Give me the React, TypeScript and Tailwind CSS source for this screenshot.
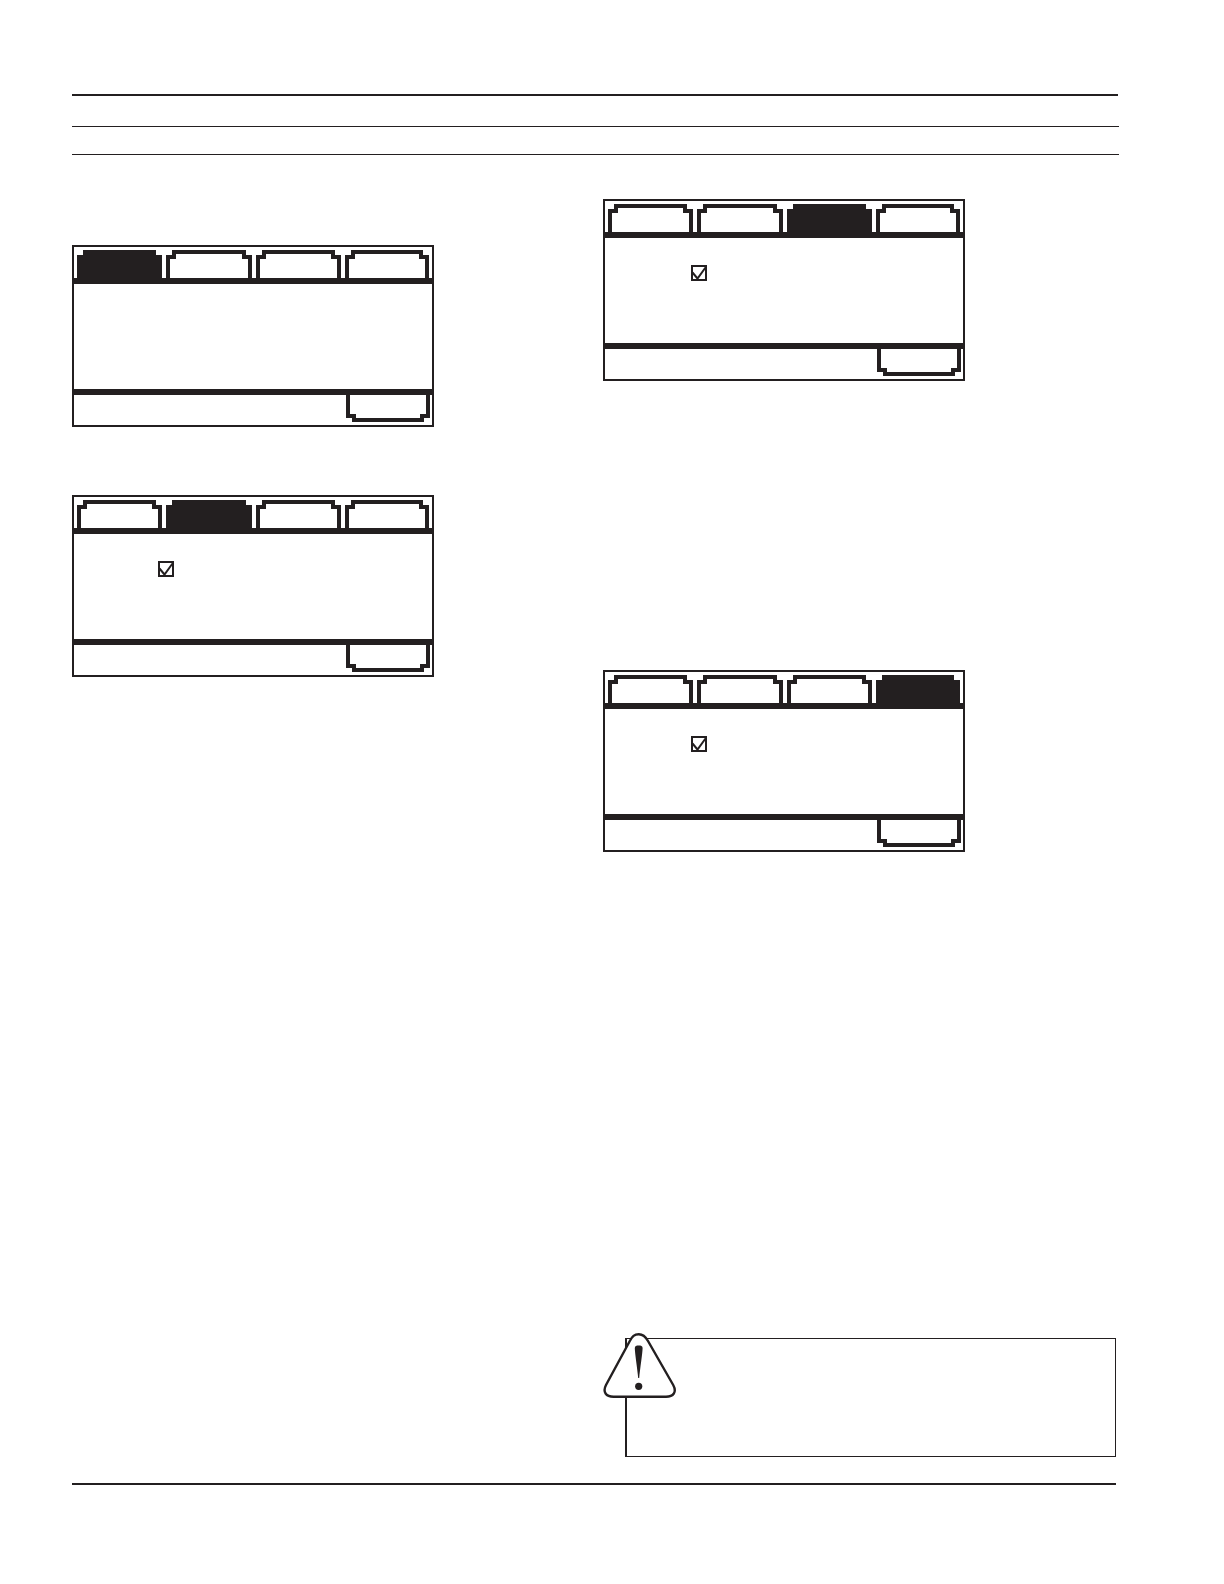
import clsx from "clsx";

// stepped corners: the inner face repeats the outer shape 4px further in
const TAB_SHAPE =
  "[clip-path:polygon(6px_0,calc(100%_-_6px)_0,calc(100%_-_6px)_5px,100%_5px,100%_100%,0_100%,0_5px,6px_5px)]";
const FOOT_SHAPE =
  "[clip-path:polygon(0_0,100%_0,100%_calc(100%_-_4px),calc(100%_-_6px)_calc(100%_-_4px),calc(100%_-_6px)_100%,6px_100%,6px_calc(100%_-_4px),0_calc(100%_-_4px))]";

function CheckBox({ label }: { label: string }) {
  return (
    <label className="relative block w-4 h-4">
      <input
        type="checkbox"
        defaultChecked
        aria-label={label}
        className="peer appearance-none block w-4 h-4 border-2 border-[#231f20] bg-white"
      />
      <svg
        viewBox="0 0 16 16"
        className="absolute inset-0 w-4 h-4 pointer-events-none invisible peer-checked:visible"
        fill="none"
        stroke="#231f20"
        strokeWidth="2"
      >
        <path d="M1.5 7.5 L6.5 13.5 L14.5 2.5" />
      </svg>
    </label>
  );
}

type ScreenProps = {
  name: string;
  active: number;
  bodyClass?: string;
  check?: boolean;
};

function Screen({ name, active, bodyClass, check = true }: ScreenProps) {
  return (
    <section aria-label={name} className="w-full max-w-[362px] border-2 border-[#231f20] bg-white">
      {/* Tabs */}
      <div role="tablist" className="grid grid-cols-[85fr_86fr_85fr_84fr] gap-1 px-[3px] pt-[3px]">
        {[0, 1, 2, 3].map((i) => (
          <button
            key={i}
            type="button"
            role="tab"
            aria-selected={i === active}
            aria-label={`Tab ${i + 1}`}
            className={clsx("h-7 px-1 pt-1 bg-[#231f20]", TAB_SHAPE)}
          >
            <span className={clsx("block h-full", TAB_SHAPE, i === active ? "bg-[#231f20]" : "bg-white")} />
          </button>
        ))}
      </div>

      {/* Body */}
      <div className={clsx("min-h-[117px] border-y-[6px] border-[#231f20] pt-[27px]", bodyClass)}>
        {check && <CheckBox label={`${name} enabled`} />}
      </div>

      {/* Footer */}
      <div className="flex justify-end pr-0.5 pb-[3px]">
        <button
          type="button"
          aria-label="Exit"
          className={clsx("w-[84px] h-[27px] px-1 pb-1 bg-[#231f20]", FOOT_SHAPE)}
        >
          <span className={clsx("block h-full bg-white", FOOT_SHAPE)} />
        </button>
      </div>
    </section>
  );
}

function Caution() {
  return (
    <aside aria-label="Caution" className="relative ml-[22px] mr-[3px] min-h-[119px] border border-l-2 border-[#231f20]">
      <svg
        viewBox="0 0 74 66"
        className="absolute -left-6 -top-1.5 w-[74px] h-[66px]"
        fill="#231f20"
      >
        <path
          d="M26.8 8 C29.3 3.5 31.2 1.2 35.8 1.2 S42.5 3.5 45 8 L70.2 52 C74 59 70.5 63.7 63 63.7 H10.5 C3 63.7 -0.6 59 3 52 Z"
          fill="#fff"
          stroke="#231f20"
          strokeWidth="2.4"
        />
        <path d="M31.8 15 C31.8 12.8 33.5 12.4 35.7 12.4 S39.6 12.8 39.6 15 C39.6 20 37 36 36.2 45 H35.2 C34.4 36 31.8 20 31.8 15 Z" />
        <circle cx="35.7" cy="53.3" r="3.6" />
      </svg>
    </aside>
  );
}

export default function App() {
  return (
    <div className="min-h-screen bg-white pl-[72px] pr-[105px] pt-[94px] pb-[99px]">
      <header>
        <div className="mr-px border-t-2 border-[#231f20]" />
        <div className="mt-[30px] h-[29px] border-y border-[#231f20]" />
      </header>

      <main className="grid grid-cols-2 gap-[15px]">
        <div className="flex flex-col gap-[68px] pt-[90px]">
          <Screen name="Screen 1" active={0} check={false} />
          <Screen name="Screen 2" active={1} bodyClass="pl-[84px]" />
        </div>
        <div className="flex flex-col pt-11">
          <Screen name="Screen 3" active={2} bodyClass="pl-[86px]" />
          <div className="mt-[289px] mb-[486px]">
            <Screen name="Screen 4" active={3} bodyClass="pl-[86px]" />
          </div>
          <Caution />
        </div>
      </main>

      <footer className="mt-[26px] mr-[3px] border-t-2 border-[#231f20]" />
    </div>
  );
}
